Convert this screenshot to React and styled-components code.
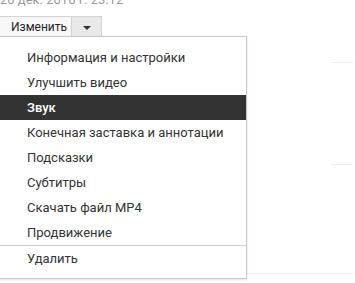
import React from 'react';
import styled, { createGlobalStyle } from 'styled-components';

const Global = createGlobalStyle`
  html, body {
    margin: 0;
    padding: 0;
    background: #fff;
    overflow: hidden;
  }
  body {
    font-family: Roboto, "Noto Sans", Arial, sans-serif;
    width: 355px;
    height: 283px;
  }
`;

const Page = styled.div`
  position: relative;
  width: 355px;
  height: 283px;
  overflow: hidden;
  margin-left: -2px;
`;

const Header = styled.div`
  height: 36px;
  display: flex;
  flex-direction: column;
  justify-content: space-between;
`;

const DateLine = styled.div`
  font-size: 13px;
  line-height: 15px;
  color: #9a9a9a;
  margin-top: -8px;
  padding-left: 2px;
  height: 15px;
`;

const ButtonGroup = styled.div`
  display: flex;
  height: 20px;
`;

const EditButton = styled.div`
  box-sizing: border-box;
  height: 20px;
  width: 74px;
  padding-left: 12px;
  font-size: 12px;
  line-height: 20px;
  color: #222;
  background: #f8f8f8;
  border: 1px solid #d3d3d3;
  border-bottom: none;
`;

const ToggleButton = styled.div`
  box-sizing: border-box;
  height: 20px;
  width: 30px;
  display: flex;
  align-items: center;
  justify-content: center;
  background: #e9e9e9;
  border: 1px solid #d3d3d3;
  border-left: none;
  border-bottom: none;
`;

const Caret = styled.span`
  width: 0;
  height: 0;
  border-left: 4px solid transparent;
  border-right: 4px solid transparent;
  border-top: 4px solid #333;
  margin-top: 2px;
`;

const Menu = styled.ul`
  position: absolute;
  top: 36px;
  left: 0;
  box-sizing: border-box;
  width: 249px;
  margin: 0;
  padding: 8px 0 7px;
  list-style: none;
  background: #fff;
  border: 1px solid #c8c8c8;
  box-shadow: 0 1px 2px rgba(0, 0, 0, 0.12);
  z-index: 2;
`;

const Item = styled.li`
  height: 25px;
  line-height: 25px;
  padding-left: 28px;
  font-size: 13px;
  color: ${(p) => (p.active ? '#fff' : '#333')};
  background: ${(p) => (p.active ? '#333' : 'transparent')};
  font-weight: ${(p) => (p.active ? 500 : 400)};
  white-space: nowrap;
`;

const Divider = styled.li`
  height: 1px;
  background: #cfcfcf;
`;

const Rows = styled.div`
  position: absolute;
  top: 0;
  right: 0;
  width: 110px;
`;

const RowLine = styled.div`
  height: 1px;
  background: #ececec;
  margin-left: ${(p) => p.indent}px;
  margin-top: ${(p) => p.gap}px;
`;

const items = [
  'Информация и настройки',
  'Улучшить видео',
  'Звук',
  'Конечная заставка и аннотации',
  'Подсказки',
  'Субтитры',
  'Скачать файл MP4',
  'Продвижение',
];

export default function App() {
  return (
    <Page>
      <Global />
      <Header>
        <DateLine>20 дек. 2016 г. 23:12</DateLine>
        <ButtonGroup>
          <EditButton>Изменить</EditButton>
          <ToggleButton>
            <Caret />
          </ToggleButton>
        </ButtonGroup>
      </Header>
      <Rows>
        <RowLine indent={88} gap={62} />
        <RowLine indent={88} gap={101} />
        <RowLine indent={0} gap={108} />
      </Rows>
      <Menu>
        {items.map((t) => (
          <Item key={t} active={t === 'Звук'}>
            {t}
          </Item>
        ))}
        <Divider />
        <Item>Удалить</Item>
      </Menu>
    </Page>
  );
}
